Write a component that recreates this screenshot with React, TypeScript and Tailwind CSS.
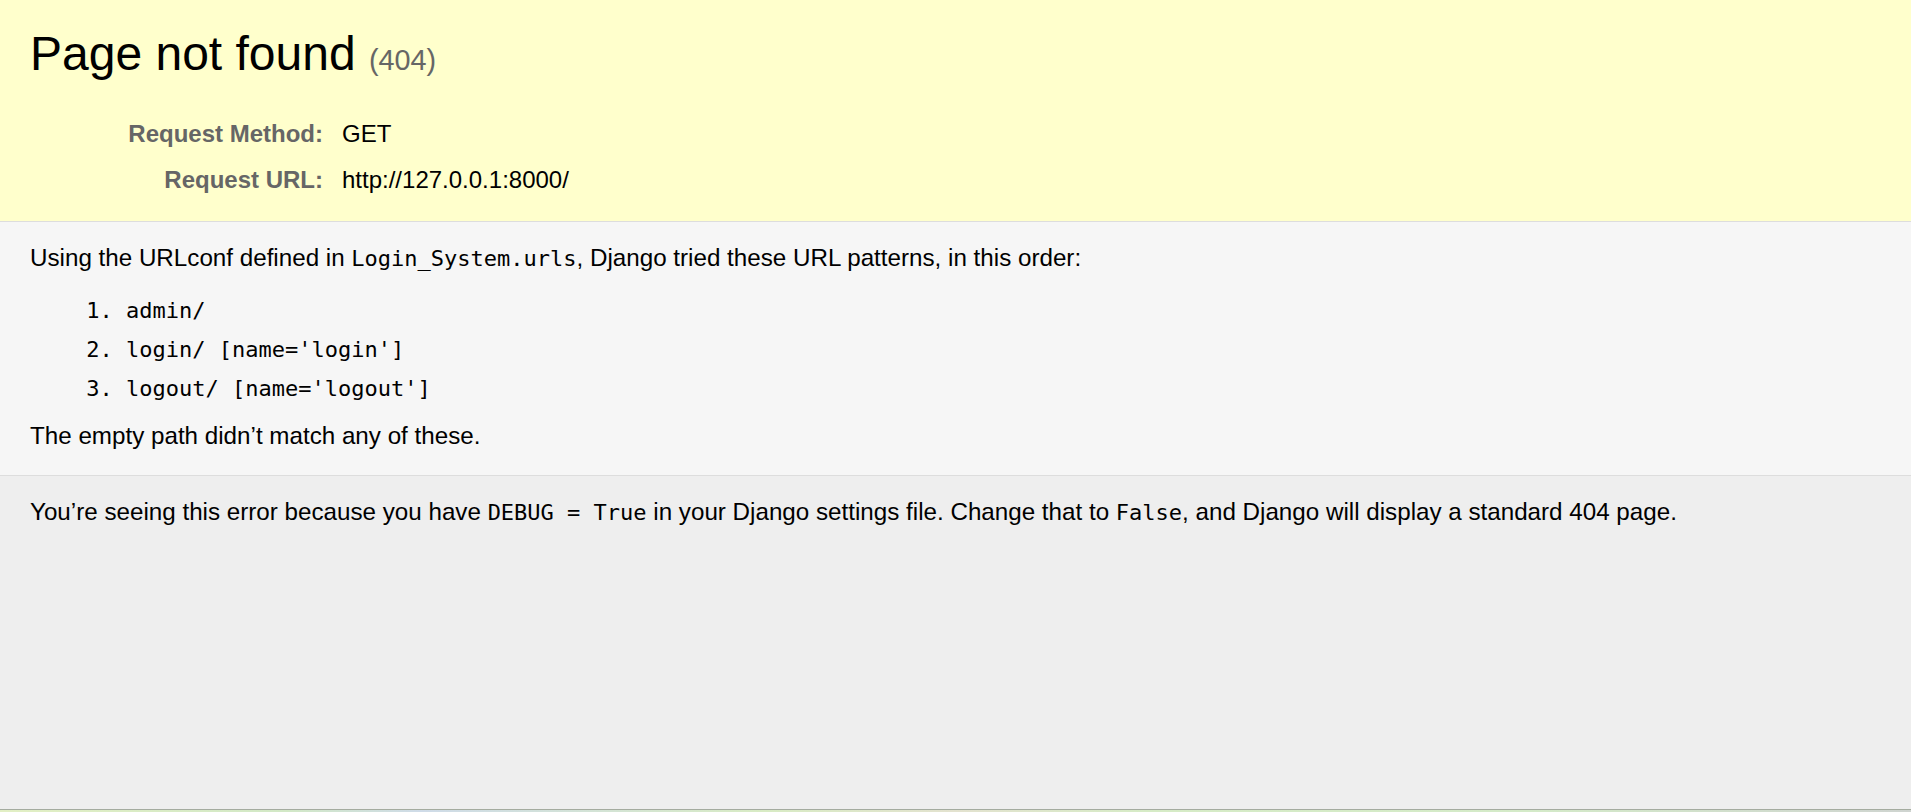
import React from "react";

const sans = "font-['Liberation_Sans',Arial,sans-serif]";
const mono = "font-['DejaVu_Sans_Mono','Liberation_Mono',monospace] text-[22px]";

export default function App() {
  return (
    <div className={`h-[812px] w-full flex flex-col bg-[#eeeeee] text-black ${sans} text-[24px]`}>
      <header className="bg-[#ffffcc] border-b border-[#dddddd] pl-[30px] pt-[26px] pb-[18px]">
        <h1 className="text-[48px] leading-[56px] font-normal">
          Page not found <span className="text-[28.8px] leading-none text-[#666666]">(404)</span>
        </h1>
        <div className="mt-[29px] grid grid-cols-[293px_1fr] gap-x-[19px] leading-[46px]">
          <div className="text-right font-bold text-[#666666]">Request Method:</div>
          <div>GET</div>
          <div className="text-right font-bold text-[#666666]">Request URL:</div>
          <div>http://127.0.0.1:8000/</div>
        </div>
      </header>

      <section className="bg-[#f6f6f6] border-b border-[#dddddd] pl-[30px] pt-[22px] pb-[25px]">
        <p className="leading-[28px] text-[24.2px]">
          Using the URLconf defined in <code className={mono}>Login_System.urls</code>, Django tried these URL
          patterns, in this order:
        </p>
        <ol className={`mt-[18px] ml-[96px] list-decimal ${mono} leading-[39px]`}>
          <li>admin/</li>
          <li>login/ [name='login']</li>
          <li>logout/ [name='logout']</li>
        </ol>
        <p className="mt-[14px] leading-[28px] text-[24.2px]">The empty path didn’t match any of these.</p>
      </section>

      <section className="flex-1 bg-[#eeeeee] pl-[30px] pt-[22px]">
        <p className="leading-[28px] text-[24.2px]">
          You’re seeing this error because you have <code className={mono}>DEBUG = True</code> in your Django
          settings file. Change that to <code className={mono}>False</code>, and Django will display a standard 404
          page.
        </p>
      </section>

      <div className="h-px bg-[#a4ab9f]" />
      <div className="h-[2px] bg-[linear-gradient(90deg,#e2efc4_0%,#d2e8c6_15%,#cfdbe8_22%,#d8ebc4_40%,#e3e2cf_50%,#d6ebc6_60%,#d4eac8_80%,#cfd4d0_100%)]" />
    </div>
  );
}
